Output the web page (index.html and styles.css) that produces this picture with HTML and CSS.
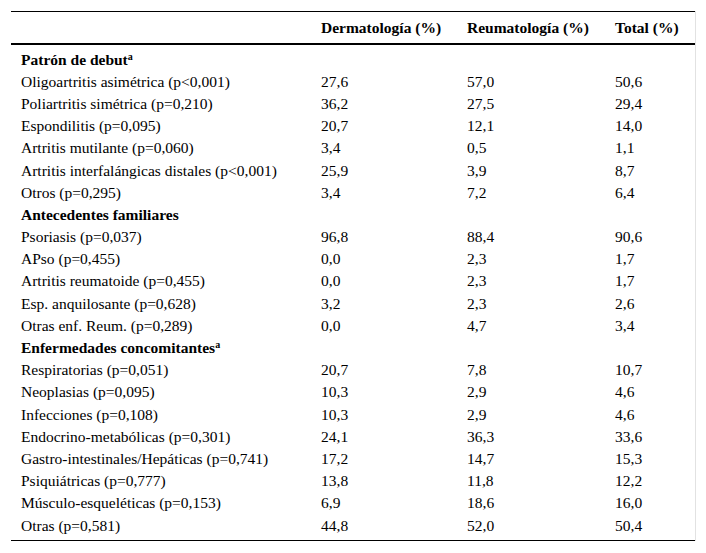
FILE: index.html
```html
<!DOCTYPE html>
<html lang="es">
<head>
<meta charset="utf-8">
<link rel="stylesheet" href="styles.css">
</head>
<body>
<div class="wrap">
<table class="tbl">
<thead>
<tr><th class="c1"></th><th class="c2">Dermatología (%)</th><th class="c3">Reumatología (%)</th><th class="c4">Total (%)</th></tr>
</thead>
<tbody>
<tr class="first"><td class="sec" colspan="4">Patrón de debut<sup>a</sup></td></tr>
<tr><td>Oligoartritis asimétrica (p&lt;0,001)</td><td>27,6</td><td>57,0</td><td>50,6</td></tr>
<tr><td>Poliartritis simétrica (p=0,210)</td><td>36,2</td><td>27,5</td><td>29,4</td></tr>
<tr><td>Espondilitis (p=0,095)</td><td>20,7</td><td>12,1</td><td>14,0</td></tr>
<tr><td>Artritis mutilante (p=0,060)</td><td>3,4</td><td>0,5</td><td>1,1</td></tr>
<tr><td>Artritis interfalángicas distales (p&lt;0,001)</td><td>25,9</td><td>3,9</td><td>8,7</td></tr>
<tr><td>Otros (p=0,295)</td><td>3,4</td><td>7,2</td><td>6,4</td></tr>
<tr><td class="sec" colspan="4">Antecedentes familiares</td></tr>
<tr><td>Psoriasis (p=0,037)</td><td>96,8</td><td>88,4</td><td>90,6</td></tr>
<tr><td>APso (p=0,455)</td><td>0,0</td><td>2,3</td><td>1,7</td></tr>
<tr><td>Artritis reumatoide (p=0,455)</td><td>0,0</td><td>2,3</td><td>1,7</td></tr>
<tr><td>Esp. anquilosante (p=0,628)</td><td>3,2</td><td>2,3</td><td>2,6</td></tr>
<tr><td>Otras enf. Reum. (p=0,289)</td><td>0,0</td><td>4,7</td><td>3,4</td></tr>
<tr><td class="sec" colspan="4">Enfermedades concomitantes<sup>a</sup></td></tr>
<tr><td>Respiratorias (p=0,051)</td><td>20,7</td><td>7,8</td><td>10,7</td></tr>
<tr><td>Neoplasias (p=0,095)</td><td>10,3</td><td>2,9</td><td>4,6</td></tr>
<tr><td>Infecciones (p=0,108)</td><td>10,3</td><td>2,9</td><td>4,6</td></tr>
<tr><td>Endocrino-metabólicas (p=0,301)</td><td>24,1</td><td>36,3</td><td>33,6</td></tr>
<tr><td>Gastro-intestinales/Hepáticas (p=0,741)</td><td>17,2</td><td>14,7</td><td>15,3</td></tr>
<tr><td>Psiquiátricas (p=0,777)</td><td>13,8</td><td>11,8</td><td>12,2</td></tr>
<tr><td>Músculo-esqueléticas (p=0,153)</td><td>6,9</td><td>18,6</td><td>16,0</td></tr>
<tr class="last"><td>Otras (p=0,581)</td><td>44,8</td><td>52,0</td><td>50,4</td></tr>
</tbody>
</table>
</div>
</body>
</html>
```
FILE: styles.css
```css
html, body {
  margin: 0;
  padding: 0;
  background: #fff;
}
body {
  padding: 11px 0 0 11px;
  font-family: "Liberation Serif", "Times New Roman", serif;
  font-size: 15.5px;
  color: #000;
}
.wrap {
  width: 684px;
  border-right: 1px solid #e2e2e2;
}
.tbl {
  width: 684px;
  border-collapse: collapse;
  border-top: 1px solid #000;
  border-bottom: 1px solid #000;
  table-layout: fixed;
}
.tbl th {
  font-weight: bold;
  text-align: left;
  height: 31px;
  padding: 0;
  vertical-align: middle;
  border-bottom: 2px solid #000;
  line-height: 17px;
}
.tbl td {
  padding: 0;
  height: 22.2px;
  line-height: 17px;
  vertical-align: middle;
  text-align: left;
  white-space: nowrap;
}
.tbl .c1 { width: 300px; padding-left: 10px; }
.tbl td:first-child { padding-left: 10px; }
.tbl .c2 { width: 146px; }
.tbl .c3 { width: 148px; }
.tbl .c4 { width: 80px; }
.tbl tr.first td { padding-top: 3px; }
.tbl tr.last td { padding-bottom: 4px; }
.sec {
  font-weight: bold;
}
sup {
  font-size: 10px;
  line-height: 0;
  vertical-align: 5px;
}
```
